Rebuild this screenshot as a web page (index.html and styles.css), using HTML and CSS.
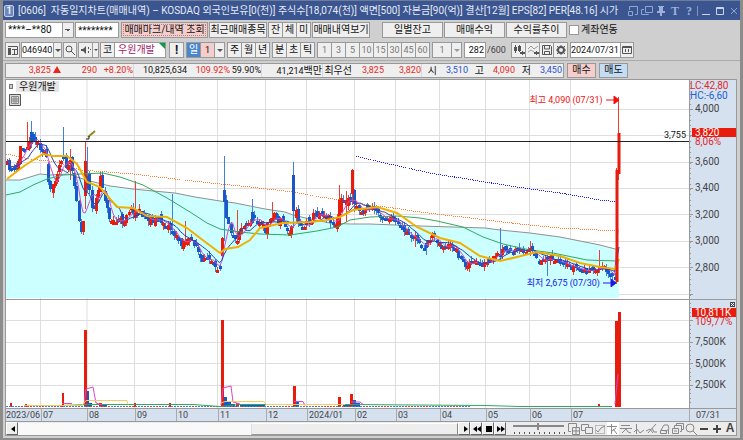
FILE: index.html
```html
<!DOCTYPE html>
<html lang="ko">
<head>
<meta charset="utf-8">
<meta name="viewport" content="width=device-width">
<title>자동일지차트</title>
<link rel="stylesheet" href="styles.css">
</head>
<body>
<main class="window">
  <header class="titlebar">
    <span class="badge">1</span>
    <h1 class="title">[0606] &nbsp;자동일지차트(매매내역) – KOSDAQ 외국인보유[0(천)] 주식수[18,074(천)] 액면[500] 자본금[90(억)] 결산[12월] EPS[82] PER[48.16] 시가</h1>
    <div class="winbtns">
      <button aria-label="축소"><svg viewBox="0 0 12 12"><path d="M2.500 5V1.500h8v8H8M1.500 6.500h4v4h-4z"/></svg></button>
      <button aria-label="복제"><svg viewBox="0 0 12 12"><path d="M4.500 1.500h7v6h-7zM3 4.500H.5v5h7V9"/></svg></button>
      <button aria-label="고정"><svg viewBox="0 0 12 12"><path class="solid" d="M3 1h6v1H8v4h2v2H7v3H5V8H2V6h2V2H3z"/></svg></button>
      <button class="glyph">T</button>
      <button class="glyph">?</button>
      <i class="bar"></i>
      <button class="bright" aria-label="최소화"><svg viewBox="0 0 12 12"><path d="M2 9.500h8"/></svg></button>
      <button class="bright" aria-label="최대화"><svg viewBox="0 0 12 12"><path d="M2.500 2.500h7v7h-7zM2 3.500h8"/></svg></button>
      <button aria-label="닫기"><svg viewBox="0 0 12 12"><path d="M3 3l6 6M9 3l-6 6"/></svg></button>
    </div>
  </header>

  <div class="toolbar">
    <select class="account" aria-label="계좌번호"><option>****–**80</option></select>
    <input class="pass" aria-label="비밀번호" value="********">
    <button class="pink mark">매매마크/내역 조회</button>
    <button class="recent">최근매매종목</button>
    <div class="group"><button class="key">잔</button><button class="key">체</button><button class="key">미</button></div>
    <button class="recent">매매내역보기</button>
    <div class="group links"><button class="link">일별잔고</button><button class="link">매매수익</button><button class="link">수익률추이</button></div>
    <label class="check"><input type="checkbox">계좌연동</label>
  </div>

  <div class="toolbar">
    <button class="key" aria-label="목록"><svg viewBox="0 0 12 12"><path d="M1 2.500h9.500v8H5M5 5.500h5M7.500 5v6"/><path class="solid" d="M1 4h3v7H1z"/></svg></button>
    <div class="group"><input class="code num" aria-label="종목코드" value="046940"><button class="drop slim" aria-label="종목 선택"></button></div>
    <button class="key thin" aria-label="검색"><svg viewBox="0 0 12 12"><circle cx="5" cy="5" r="3"/><path d="M7 7l4 4"/></svg></button>
    <div class="group"><button class="key" aria-label="소리"><svg viewBox="0 0 12 12"><path class="solid" d="M1 5h2l3-3v8L3 7H1z"/><path d="M8.500 3v2M8.500 7v2M10 5.500h1"/></svg></button><button class="drop tiny" aria-label="소리 선택"></button></div>
    <div class="group first"><button class="key">코</button><span class="stock">우원개발</span></div>
    <button class="key alert">!</button>
    <div class="group"><button class="key on">일</button><button class="key pinkkey num">1</button><button class="drop" aria-label="일 단위"></button></div>
    <div class="group"><button class="key">주</button><button class="key">월</button><button class="key">년</button></div>
    <div class="group"><button class="key">분</button><button class="key">초</button><button class="key">틱</button></div>
    <div class="group dim num"><button class="key">1</button><button class="key">3</button><button class="key">5</button><button class="key">10</button><button class="key">15</button><button class="key">30</button><button class="key">45</button><button class="key">60</button></div>
    <div class="group dim num"><button class="unit">1</button><button class="drop" aria-label="분 단위"></button></div>
    <div class="group num"><input class="count" aria-label="표시 봉수" value="282"><span class="total">/600</span></div>
    <div class="group tools">
      <button class="key" aria-label="봉차트"><svg viewBox="0 0 12 12"><path class="solid" d="M1 3h3v4H1zM5 2h3v5H5zM7 8h5v2H7zM9 7h1v4H9z"/><path d="M2.500 1v8M6.500 1v7"/></svg></button><button class="key" aria-label="선차트"><svg viewBox="0 0 12 12"><path class="light" d="M1 5l3-3 3 3 4-3M1 8l3-2 3 2"/><path class="solid" d="M7 8h5v2H7zM9 7h1v4H9z"/></svg></button><button class="key" aria-label="저장"><svg viewBox="0 0 12 12"><path d="M1.500 1.500h8l1 1v8h-9zM3.500 1v4h5V1M3.500 11V7.500h5V11"/></svg></button><button class="key" aria-label="설정"><svg viewBox="0 0 12 12"><circle class="gear" cx="6" cy="6" r="3"/><path d="M6 1v2M6 9v2M1 6h2M9 6h2M2 2l2 2M8 8l2 2M10 2L8 4M4 8l-2 2"/></svg></button>
    </div>
    <div class="group num"><input class="date" aria-label="날짜" value="2024/07/31"><button class="key thin" aria-label="달력"><svg viewBox="0 0 12 12"><path d="M1.500 2.500h9v7h-9zM1 3.500h10M4.500 5v3M7.500 5v3"/></svg></button></div>
  </div>

  <div class="quote">
    <div class="prices num">
      <span class="up c1">3,825 <svg class="tri" viewBox="0 0 8 7"><path d="M4 0l4 7H0z"/></svg></span>
      <span class="up c2">290</span><span class="up c3">+8.20%</span>
      <span class="c4 rule">10,825,634</span><span class="up c5">109.92%</span><span class="c6">59.90%</span>
      <span class="c7 rule">41,214<b>백만</b></span><span class="c8 rule"><b>최우선</b></span>
      <span class="up c9">3,825</span><span class="up c10">3,820</span>
      <span class="c11 rule"><b>시</b></span><span class="down c12">3,510</span>
      <span class="c11"><b>고</b></span><span class="up c12">4,090</span>
      <span class="c11"><b>저</b></span><span class="down c12">3,450</span>
    </div>
    <button class="order pink">매수</button>
    <button class="order sky">매도</button>
  </div>

  <section class="chart">
    <div class="panes">
      <div class="plot">
        <svg id="plot" viewBox="6 80 683 328" preserveAspectRatio="none" role="img" aria-label="우원개발 일봉 차트"></svg>
        <div class="legend"><i></i><span>우원개발</span></div>
        <svg class="gridbtn" viewBox="0 0 12 12"><path class="back" d="M.5.5h11v11H.5z"/><path class="mesh" d="M2.500 2.500h7v7h-7zM5 3v6M7 3v6M3 5h6M3 7h6"/></svg>
        <p class="note high">최고 4,090 (07/31) <svg viewBox="0 0 13 8"><path d="M0 4h9M8 0l5 4-5 4z"/></svg></p>
        <p class="note level">3,755</p>
        <p class="note low">최저 2,675 (07/30) <svg viewBox="0 0 13 8"><path d="M0 4h9M8 0l5 4-5 4z"/></svg></p>
      </div>
      <div class="axis">
        <svg id="axis" viewBox="689 80 48 328">
          <g id="ticks"></g>
          <text class="upt" x="690" y="89">LC:42,80</text>
          <text class="downt" x="690" y="99">HC:-6,60</text>
          <text x="695" y="112">4,000</text>
          <path class="tag" d="M692 128h44v9h-44z"/><text class="white" x="695" y="136">3,820</text>
          <text class="upt" x="695" y="145">8,06%</text>
          <text x="695" y="165">3,600</text><text x="695" y="191">3,400</text>
          <text x="695" y="218">3,200</text><text x="695" y="244">3,000</text><text x="695" y="271">2,800</text>
          <path class="close" d="M730 302h5v5h-5z"/><path class="x" d="M731 303l3 3M734 303l-3 3"/>
          <path class="tag" d="M692 308h44v9h-44z"/><text class="white" x="695" y="316">10,811K</text>
          <text class="upt" x="695" y="325">109,77%</text>
          <text x="695" y="345">7,500K</text><text x="695" y="367">5,000K</text><text x="695" y="388">2,500K</text>
        </svg>
      </div>
    </div>
    <div class="panes dates">
      <div class="months"><span>2023/06</span><span>07</span><span>08</span><span>09</span><span>10</span><span>11</span><span>12</span><span>2024/01</span><span>02</span><span>03</span><span>04</span><span>05</span><span>06</span><span>07</span></div>
      <div class="last">07/31</div>
    </div>
    <div class="controls">
      <button class="step" aria-label="왼쪽"><svg viewBox="0 0 12 12"><path class="black" d="M8 3v6L4 6z"/></svg></button>
      <div class="track"><div class="thumb"></div></div>
      <button class="step" aria-label="오른쪽"><svg viewBox="0 0 12 12"><path class="black" d="M5 3v6l4-3z"/></svg></button>
      <button class="step" aria-label="뒤로"><svg viewBox="0 0 12 12"><path class="black" d="M6 3v6L2 6zM10 3v6L6 6z"/></svg></button>
      <button class="step" aria-label="정지"><svg viewBox="0 0 12 12"><path class="black" d="M3 3h6v6H3z"/></svg></button>
      <button class="step" aria-label="앞으로"><svg viewBox="0 0 12 12"><path class="black" d="M2 3v6l4-3zM6 3v6l4-3z"/></svg></button>
      <svg class="slider" viewBox="0 0 54 14"><path class="groove" d="M1 4h51"/><path class="dots" d="M2 11h51"/><path class="knob" d="M26 1v7"/></svg>
      <div class="draw">
        <button aria-label="추가"><svg viewBox="0 0 12 12"><path d="M3 8.500H.5v-8h8V4M4.500 4.500h7v7h-7zM8 5v6M5 8h6"/></svg></button>
        <button aria-label="겹치기"><svg viewBox="0 0 12 12"><path d="M4 7.500H.5v-6h7V4M4.500 4.500h7v6h-7z"/></svg></button>
        <button aria-label="지표"><svg viewBox="0 0 12 12"><path stroke-dasharray="1 1" d="M1.500 2.500h9v8h-9z"/><path d="M2 7l2 2 3-4 4-2"/></svg></button>
        <button class="active" aria-label="추세선"><svg viewBox="0 0 12 12"><path d="M0 3.500h10M4.500 1v10M5 8l4-3M6 6l4 5"/></svg></button>
        <button aria-label="수평선"><svg viewBox="0 0 12 12"><path d="M1 2.500h9M0 5.500h12M2 10l4-4 2 3 3 1"/></svg></button>
        <button aria-label="수직선"><svg viewBox="0 0 12 12"><path d="M3.500 1v10M1 9l3-3 3 4 4-3"/></svg></button>
        <button aria-label="사선"><svg viewBox="0 0 12 12"><path d="M2 10l8-9M0 8l4-2 3 4M6 5l2 4h3"/></svg></button>
        <button aria-label="지우기"><svg viewBox="0 0 12 12"><path d="M2 7l3-5h4l1 4-3 2zM1.500 7.500h6v3h-6zM9.500 7v4"/></svg></button>
        <button aria-label="모두 지우기"><svg viewBox="0 0 12 12"><path d="M4.500 3V.5h7v6H9M2.500 5V2.500h7v6H8M.5 5.500h6v5h-6zM2 8h3"/></svg></button>
        <button aria-label="확대"><svg viewBox="0 0 12 12"><circle cx="5" cy="5" r="4"/><path d="M8 8l4 4"/></svg></button>
        <button aria-label="축소"><svg viewBox="0 0 12 12"><path class="bold" d="M2 6h8"/></svg></button>
        <button aria-label="늘리기"><svg viewBox="0 0 12 12"><path class="bold" d="M2 6h8M6 2v8"/></svg></button>
        <button class="letter">A</button>
      </div>
    </div>
  </section>
</main>
<script src="chart.js"></script>
</body>
</html>
```
FILE: styles.css
```css
* { box-sizing: border-box; }
body {
  margin: 0;
  background: #cfcfcf;
  color: #111;
  font: 10px/12px Roboto, "Noto Sans CJK KR", sans-serif;
}
button, input, select { font: inherit; color: inherit; margin: 0; padding: 0; border-radius: 0; }
b { font-weight: 400; font-size: 10px; }
.num { font-size: 9px; }
svg { display: block; fill: none; stroke: #555; }
.window { min-height: 100vh; border: solid #8c8c8c; border-width: 0 3px 4px; }

.titlebar { display: flex; align-items: center; height: 20px; padding: 0 0 0 1px; background: #3a5590; border-top: 1px solid #6f7c98; color: #e4eaf6; }
.badge { flex: none; width: 10px; height: 12px; border: 1px solid #c5d1ea; border-radius: 2px; background: #6f88bb; font-weight: 700; line-height: 10px; text-align: center; }
.title { flex: 1; min-width: 0; margin: 0 4px; overflow: hidden; white-space: nowrap; font-size: 10px; font-weight: 400; }
.winbtns { display: flex; align-items: center; gap: 2px; }
.winbtns button { width: 12px; height: 14px; border: 0; background: none; color: #9db0d8; }
.winbtns svg { width: 12px; height: 12px; stroke: #8fa4d0; }
.winbtns .solid { fill: #9db0d8; stroke: none; }
.winbtns .bright svg { stroke: #c9d4ea; }
.winbtns .glyph { font: 700 12px/14px "Liberation Serif", serif; }
.bar { width: 1px; height: 10px; background: #8195c0; }

.toolbar { display: flex; align-items: center; gap: 1px; height: 20px; padding: 0 2px; white-space: nowrap; }
.toolbar button, .toolbar input, .toolbar select, .stock { height: 16px; border: 1px solid #999; background: #efefef; flex: none; overflow: hidden; line-height: 12px; }
.toolbar input, .toolbar select { background: #fff; padding: 0 2px; }
.toolbar .account { width: 69px; padding: 0 2px; appearance: none; background: linear-gradient(45deg, transparent 50%, #555 50%) no-repeat right 5px center / 3px 3px, linear-gradient(-45deg, transparent 50%, #555 50%) no-repeat right 2px center / 3px 3px, linear-gradient(90deg, #999 1px, #efefef 1px) no-repeat right / 11px 100%, #fff; }
.toolbar .pass { width: 44px; margin-right: 1px; }
.toolbar .pink, .order.pink { background: #f5cdca; }
.mark { width: 87px; outline: 1px dotted #b08080; outline-offset: -3px; }
.recent { width: 58px; }
.group { display: flex; flex: none; }
.group > * + * { margin-left: -1px; }
.group + .group { margin-left: 1px; }
.group + .first { margin-left: 0; }
.key { display: grid; place-items: center; width: 15px; }
.key.thin { width: 14px; }
.toolbar svg { width: 12px; height: 12px; }
.solid { fill: #555; stroke: none; }
.light { stroke: #999; }
.gear { stroke-width: 2; }
.toolbar .links { margin-left: 11px; gap: 2px; }
.link { width: 61px; }
.check { display: flex; align-items: center; gap: 2px; margin-left: 1px; }
.toolbar .check input { width: 10px; height: 10px; appearance: none; }
.drop { display: grid; place-items: center; width: 11px; }
.drop::before { content: ""; border: solid transparent; border-width: 3px 3px 0; border-top-color: #555; }
.drop.slim { width: 9px; }
.drop.tiny { width: 7px; }
.drop.tiny::before { border-width: 2px 2px 0; }
.toolbar .code { width: 33px; padding: 0; }
.stock { position: relative; width: 52px; padding: 1px 3px; color: #a01868; }
.toolbar .stock { background: #fff; }
.stock::after { content: ""; position: absolute; top: 0; right: 0; border: solid transparent; border-width: 0 6px 6px 0; border-right-color: #0a9b4a; }
.toolbar .alert { margin: 0 1px 0 2px; font-weight: 700; font-size: 12px; }
.toolbar .on { background: #4a86cc; color: #fff; }
.toolbar .pinkkey { background: #f5cdca; }
.dim { color: #777; }
.dim .drop::before { border-top-color: #999; }
.unit { width: 20px; }
.toolbar .count { width: 22px; text-align: right; padding: 0 1px; }
.toolbar .total { width: 24px; padding-left: 2px; line-height: 16px; color: #444; }
.toolbar .date { width: 51px; padding: 0; }

.quote { display: flex; align-items: center; gap: 3px; height: 19px; padding: 0 2px; border-top: 1px solid #aaa; white-space: nowrap; }
.prices { display: flex; align-items: center; width: 559px; height: 15px; border: 1px solid #999; background: #efefef; }
.prices span { flex: none; height: 13px; line-height: 13px; text-align: right; }
.rule { border-left: 1px solid #d8d8d8; }
.up { color: #e8281c; }
.down { color: #2850d0; }
.tri { display: inline-block; width: 8px; height: 7px; fill: #e8281c; stroke: none; }
.c1 { width: 55px; } .c2 { width: 36px; } .c3 { width: 36px; } .c4 { width: 54px; } .c5 { width: 43px; } .c6 { width: 31px; }
.c7 { width: 61px; } .c8 { width: 30px; } .c9 { width: 32px; } .c10 { width: 37px; }
.c11 { width: 16px; } .c12 { width: 31px; }
.order { width: 29px; height: 15px; border: 1px solid #999; line-height: 12px; }
.order.sky { background: #c4dcf4; }

.chart { margin: 0 3px 2px 2px; border: 1px solid #999; background: #fff; }
.panes { display: grid; grid-template-columns: 1fr 47px; }
.plot { position: relative; }
.plot > #plot { width: 100%; height: 328px; }
.axis { background: #d6e1f0; overflow: hidden; }
.axis svg { width: 48px; height: 328px; }
.axis text { fill: #444; stroke: none; font-size: 10px; }
.axis .upt { fill: #e02828; }
.axis .downt { fill: #2060d0; }
.axis .white { fill: #fff; }
.tag { fill: #e81c0c; stroke: none; }
.close { fill: #444; stroke: none; }
.x { stroke: #fff; }
.tickmark { stroke: #999; }
.legend { position: absolute; left: 3px; top: 1px; display: flex; align-items: center; gap: 3px; }
.legend i { width: 4px; height: 5px; border: 1px solid #777; background: #ccc; }
.legend span { padding: 0 3px; background: #e6e6e6; line-height: 11px; }
.gridbtn { position: absolute; left: 3px; top: 14px; width: 12px; height: 12px; }
.gridbtn .back { fill: #ddd; }
.mesh { stroke: #888; }
.note { position: absolute; display: flex; align-items: center; gap: 3px; margin: 0; font-size: 9px; white-space: nowrap; }
.note svg { width: 13px; height: 8px; }
.high { right: 10.3%; top: 14px; color: #f01010; }
.high path { stroke: #f01010; fill: #f01010; }
.low { right: 10.7%; top: 197px; color: #1818e8; }
.low path { stroke: #1818e8; fill: #1818e8; }
.level { right: 3px; top: 49px; }

.grid { stroke: #dedede; }
.cloud { fill: #ccffff; stroke: none; }
.ma120 { stroke: #909090; }
.ma60 { stroke: #30a860; }
.ma20 { stroke: #f0b000; stroke-width: 2; }
.ma20.thin { stroke: #f4cc60; stroke-width: 1; }
.ma5 { stroke: #d848c8; }
.ma10 { stroke: #2040b0; }
.ma240 { stroke: #ff8030; stroke-dasharray: 1 1; shape-rendering: crispEdges; }
.ma480 { stroke: #2020f0; stroke-dasharray: 1 1; shape-rendering: crispEdges; }
.wick-up { stroke: #e84030; }
.wick-down { stroke: #4080d8; }
.body-up { fill: #e81c0c; stroke: none; }
.body-down { fill: #1858c8; stroke: none; }
.hline { stroke: #222; }
.split { stroke: #999; }
.pencil { stroke: #908820; stroke-width: 2; }

.dates { height: 14px; border: solid #999; border-width: 1px 0; background: #d6e1f0; color: #444; font-size: 9px; line-height: 12px; }
.months { display: grid; grid-template-columns: 35fr 46fr 48fr 41fr 42fr 48fr 41fr 48fr 41fr 44fr 46fr 44fr 41fr 118fr; }
.months span { min-width: 0; overflow: hidden; }
.months span + span { padding-left: 1px; border-left: 1px solid #aaa; }
.last { padding-left: 6px; border-left: 1px solid #aaa; }

.controls { display: flex; align-items: center; height: 13px; background: #ececec; }
.step { flex: none; display: grid; place-items: center; width: 12px; height: 13px; border: 1px solid; border-color: #fff #666 #666 #fff; background: #eee; }
.step svg { width: 12px; height: 12px; }
.black { fill: #000; stroke: none; }
.track { flex: 1; height: 12px; background: #f9f9f9; }
.thumb { width: 47%; height: 12px; margin-left: auto; border: 1px solid; border-color: #fff #888 #999 #ddd; background: #eee; }
.slider { flex: none; width: 54px; height: 14px; margin: 0 2px 0 6px; }
.groove { stroke: #888; stroke-width: 2; }
.dots { stroke: #555; stroke-dasharray: 1 4; stroke-width: 2; }
.knob { stroke: #888; stroke-width: 2; }
.draw { display: flex; align-items: center; gap: 1px; }
.draw button { width: 12px; height: 13px; border: 0; background: none; }
.draw svg { width: 12px; height: 12px; stroke: #888; }
.draw .active { background: #fff; }
.draw .bold { stroke: #444; stroke-width: 2; }
.draw .letter { font: 700 12px/13px "Liberation Sans", sans-serif; color: #444; }
```
FILE: chart.js
```javascript
(function () {
  var NS = "http://www.w3.org/2000/svg";
  var plot = document.getElementById("plot");

  function add(cls, d, parent) {
    var p = document.createElementNS(NS, "path");
    p.setAttribute("class", cls);
    p.setAttribute("d", d);
    (parent || plot).appendChild(p);
  }
  function line(pts) {
    return "M" + pts.map(function (p) { return p[0] + " " + p[1]; }).join("L");
  }
  var seed = 11;
  function rnd() { seed = (seed * 16807) % 2147483647; return seed / 2147483647; }

  // Closing-price path: x, y
  var trend = [[7,165],[13,170],[15,173],[18,160],[20,148],[24,148],[27,142],[29,140],[31,134],[35,140],[40,147],[43,150],[46,160],[48,182],[50,194],[53,182],[58,168],[60,162],[63,152],[67,172],[70,158],[73,182],[77,200],[80,236],[84,216],[86,165],[88,178],[92,212],[97,196],[101,176],[104,195],[107,212],[110,220],[115,221],[123,221],[128,209],[135,211],[141,213],[147,219],[157,220],[166,223],[172,232],[180,243],[185,240],[195,243],[199,256],[203,267],[207,254],[213,261],[218,268],[221,262],[223,200],[225,210],[230,230],[236,241],[240,227],[247,226],[253,214],[260,224],[265,230],[273,212],[277,221],[282,220],[288,233],[293,218],[295,211],[298,222],[303,228],[310,218],[320,212],[330,218],[333,226],[338,218],[341,200],[345,203],[350,200],[352,195],[357,207],[362,214],[365,207],[375,210],[382,217],[392,220],[403,230],[413,238],[420,242],[423,249],[429,238],[435,237],[441,247],[447,246],[453,245],[460,258],[465,265],[470,262],[483,265],[493,259],[503,250],[513,252],[530,249],[537,261],[550,257],[562,266],[573,267],[583,271],[593,271],[600,266],[607,270],[612,276],[615,280]];
  function at(x) {
    for (var i = 1; i < trend.length; i++) {
      if (x <= trend[i][0]) {
        var a = trend[i - 1], b = trend[i];
        return a[1] + (b[1] - a[1]) * (x - a[0]) / (b[0] - a[0]);
      }
    }
    return trend[trend.length - 1][1];
  }

  // Sessions with long shadows: x -> [top, bottom]
  var spikes = { 27: [122, 150], 31: [121, 141], 63: [127, 158], 70: [149, 180], 86: [141, 200], 88: [147, 185], 135: [181, 212], 171: [194, 225], 185: [221, 247], 223: [156, 241], 253: [199, 215], 238: [210, 245], 272: [202, 220], 294: [162, 216], 340: [185, 227], 345: [191, 222], 351: [169, 203], 354: [190, 212], 499: [228, 261], 530: [241, 256], 547: [255, 276], 599: [250, 273], 425: [240, 255], 414: [232, 247] };
  var reds = { 27: 1, 70: 1, 86: 1, 135: 1, 185: 1, 238: 1, 272: 1, 340: 1, 345: 1, 351: 1, 530: 1, 599: 1, 414: 1 };
  var bodies = { 86: [161, 196], 223: [190, 202], 294: [175, 211], 340: [200, 226], 351: [170, 194] };
  var up = "", down = "", upBody = "", downBody = "", closes = [];
  var prev = at(7);
  for (var k = 0; k < 281; k++) {
    var x = 7 + k * 2.17;
    if (x > 615) break;
    var noise = x < 370 ? 8 : 6;
    var c = at(x) + (rnd() - 0.5) * noise;
    var o = prev + (rnd() - 0.5) * noise;
    var isUp = c < o;
    var top = Math.min(o, c), bot = Math.max(o, c);
    if (bot - top > 20) { if (isUp) bot = top + 18; else top = bot - 18; }
    var hi = top - rnd() * 5, lo = bot + rnd() * 5;
    for (var s in spikes) {
      if (Math.abs(x - s) < 1.09) {
        hi = Math.min(hi, spikes[s][0]);
        lo = Math.max(lo, spikes[s][1]);
        isUp = !!reds[s];
        if (bodies[s]) { top = bodies[s][0]; bot = bodies[s][1]; }
      }
    }
    var cx = Math.round(x) + 0.5;
    var w = "M" + cx + " " + Math.round(hi) + "V" + Math.round(lo);
    var b = "M" + (cx - 1.5) + " " + Math.round(top) + "h3V" + Math.round(Math.max(bot, top + 3)) + "h-3z";
    if (isUp) { up += w; upBody += b; } else { down += w; downBody += b; }
    closes.push([x, c]);
    prev = c;
  }
  function average(n) {
    return closes.map(function (p, i) {
      var from = Math.max(0, i - n + 1), sum = 0;
      for (var j = from; j <= i; j++) sum += closes[j][1];
      return [p[0].toFixed(1), (sum / (i - from + 1)).toFixed(1)];
    });
  }

  var grey = [[6,180],[20,180],[30,177],[40,174],[50,175],[68,174],[80,178],[90,181],[110,186],[133,189],[153,191],[175,193],[195,197],[220,201],[235,203],[265,209],[285,212],[293,215],[310,219],[330,223],[350,224],[370,224],[396,225],[420,226],[485,228],[500,230],[530,233],[560,237],[600,245],[619,250]];

  var grid = "";
  [40.5,87,134.5,175.5,217.5,265.5,306.5,354.5,395.5,439.5,485.5,529.5,570.5].forEach(function (v) { grid += "M" + v + " 80V408"; });
  [109.5,135.5,162.5,188.5,214.5,241.5,267.5,294.5,320.5,342.5,363.5,385.5].forEach(function (v) { grid += "M6 " + v + "H689"; });
  add("grid", grid);
  // The cloud hides the grid beneath it
  add("cloud", line(grey) + "V298H6z");

  add("ma120", line(grey));
  add("ma240", line([[6,154],[30,159],[57,162],[80,170],[133,174],[175,179],[220,184],[250,187],[293,192],[320,197],[340,200],[370,205],[400,209],[420,212],[470,218],[520,224],[560,228],[616,231]]));
  add("ma480", line([[356,156],[380,162],[430,173],[485,182],[530,189],[560,193],[600,200],[618,202]]));
  add("wick-up", up);
  add("wick-down", down);
  add("body-down", downBody);
  add("body-up", upBody);
  add("ma60", line([[6,195],[20,192],[33,185],[47,179],[63,175],[80,174],[103,173],[120,177],[143,185],[167,198],[190,212],[207,223],[220,229],[240,232],[260,234],[290,235],[317,231],[337,227],[350,220],[370,217],[397,216],[420,218],[437,221],[463,227],[483,237],[503,244],[530,250],[553,253],[587,260],[617,261]]));
  add("ma5", line(average(5)) + "L618 229");
  add("ma10", line(average(10)) + "L619 247");
  add("ma20", line([[7,179],[20,169],[27,164],[43,154],[53,156],[67,156],[77,164],[87,182],[100,187],[117,207],[133,208],[147,216],[167,217],[187,228],[200,238],[220,253],[225,249],[238,247],[250,240],[260,228],[283,223],[310,222],[327,220],[340,217],[353,210],[377,207],[397,213],[417,227],[440,238],[460,243],[480,256],[500,261],[517,257],[537,252],[560,256],[580,263],[600,267],[615,269],[619,259]]));
  add("wick-up", "M618.5 97V180M616.5 168V284");
  add("body-up", "M617.5 133h3v41h-3zM615.5 170h3v112h-3z");
  add("hline", "M6 141.5H689");
  add("pencil", "M88 137L95 131");
  add("hline", "M86 139h3v-3");

  // Volume pane
  add("body-up", "M10 403h2v4h-2zM25 404h2v3h-2zM62 393h2v14h-2zM84 330h3v77h-3zM99 403h3v4h-3zM134 403h2v4h-2zM169 403h2v4h-2zM221 320h3v87h-3zM236 403h3v4h-3zM293 386h3v21h-3zM338 397h3v10h-3zM350 394h3v13h-3zM598 404h2v3h-2zM615 321h3v86h-3zM618 312h3v95h-3z");
  add("body-down", "M87 391h2v16h-2zM89 403h3v4h-3zM102 404h5v3h-5zM224 397h3v10h-3zM227 401h4v6h-4zM231 404h4v3h-4zM240 404h25v3h-25zM296 402h3v5h-3zM343 404h7v3h-7zM353 400h3v7h-3zM356 403h4v4h-4z");
  var red = "", blue = "";
  for (var v = 6; v < 470; v += 3) { if (rnd() > 0.6) red += "M" + v + " 406.500h2"; else blue += "M" + v + " 406.500h2"; }
  add("wick-down", blue);
  add("wick-up", red);
  add("ma60", "M60 405.500L90 404.500L193 404.500L220 406.500L240 404.500L350 404.500L485 405.500L520 406.500H612");
  add("ma5", "M62 403.500h10M84 405L86 389L93 387L96 403L102 405M221 405L223 388L231 386L233 402L240 404M294 401.500h9l2 4M351 402h9l4 3M615 404l3-30");
  add("ma20 thin", "M24 405.500L82 405.500L86 400.500H127L128 404.500M221 403L225 401.500H264L266 404.500H345");
  add("split", "M6 299.5H689");

  var ticks = document.getElementById("ticks"), t = "M689.5 80V408M689 299.500H737";
  for (var y = 83; y < 298; y += 5.3) t += "M689 " + Math.round(y) + ".500h2";
  for (y = 303; y < 406; y += 4.3) t += "M689 " + Math.round(y) + ".500h2";
  [109,135,162,188,214,241,267,294,320,342,363,385].forEach(function (q) { t += "M689 " + q + ".500h4"; });
  add("tickmark", t, ticks);
})();
```
